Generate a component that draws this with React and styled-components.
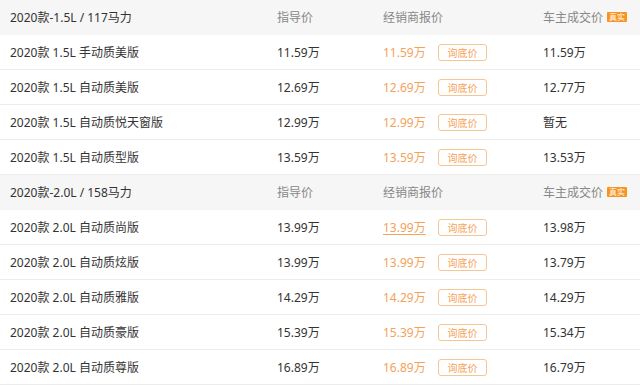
import React from "react";
import styled, { createGlobalStyle } from "styled-components";

const GlobalStyle = createGlobalStyle`
  html, body {
    margin: 0;
    padding: 0;
    background: #fff;
    font-family: "Noto Sans", "Noto Sans CJK SC", sans-serif;
  }
`;

const Table = styled.div`
  width: 640px;
  height: 385px;
  overflow: hidden;
  background: #f6f6f6;
`;

const Row = styled.div`
  display: grid;
  grid-template-columns: 267px 106px 160px 1fr;
  align-items: center;
  padding-left: 10px;
  height: 34px;
  background: ${(p) => (p.$head ? "#f6f6f6" : "#fff")};
  border-bottom: 1px solid ${(p) => (p.$head ? "#f6f6f6" : "#ececec")};
  font-size: 12px;
  color: #333;
`;

const HeadCell = styled.div`
  color: ${(p) => (p.$muted ? "#888" : "#333")};
  display: flex;
  align-items: center;
  gap: 4px;
`;

const Cell = styled.div`
  display: flex;
  align-items: center;
`;

const Dealer = styled.span`
  color: #f4a25a;
  width: 55px;
  text-decoration: ${(p) => (p.$hover ? "underline" : "none")};
  text-underline-offset: 2px;
`;

const AskButton = styled.span`
  box-sizing: border-box;
  width: 49px;
  height: 17px;
  border: 1px solid #f5c795;
  border-radius: 3px;
  color: #f4a25a;
  font-size: 10px;
  display: flex;
  align-items: center;
  justify-content: center;
`;

const Badge = styled.span`
  background: #f7941d;
  color: #fff;
  font-size: 8px;
  line-height: 10px;
  height: 10px;
  padding: 0 2px;
  border-radius: 1px;
`;

const groups = [
  {
    title: "2020款-1.5L / 117马力",
    items: [
      ["2020款 1.5L 手动质美版", "11.59万", "11.59万", "11.59万"],
      ["2020款 1.5L 自动质美版", "12.69万", "12.69万", "12.77万"],
      ["2020款 1.5L 自动质悦天窗版", "12.99万", "12.99万", "暂无"],
      ["2020款 1.5L 自动质型版", "13.59万", "13.59万", "13.53万"],
    ],
  },
  {
    title: "2020款-2.0L / 158马力",
    items: [
      ["2020款 2.0L 自动质尚版", "13.99万", "13.99万", "13.98万", true],
      ["2020款 2.0L 自动质炫版", "13.99万", "13.99万", "13.79万"],
      ["2020款 2.0L 自动质雅版", "14.29万", "14.29万", "14.29万"],
      ["2020款 2.0L 自动质豪版", "15.39万", "15.39万", "15.34万"],
      ["2020款 2.0L 自动质尊版", "16.89万", "16.89万", "16.79万"],
    ],
  },
];

export default function App() {
  return (
    <>
      <GlobalStyle />
      <Table>
        {groups.map((g) => (
          <React.Fragment key={g.title}>
            <Row $head>
              <HeadCell>{g.title}</HeadCell>
              <HeadCell $muted>指导价</HeadCell>
              <HeadCell $muted>经销商报价</HeadCell>
              <HeadCell $muted>
                车主成交价 <Badge>真实</Badge>
              </HeadCell>
            </Row>
            {g.items.map((it) => (
              <Row key={it[0]}>
                <Cell>{it[0]}</Cell>
                <Cell>{it[1]}</Cell>
                <Cell>
                  <Dealer $hover={it[4]}>{it[2]}</Dealer>
                  <AskButton>询底价</AskButton>
                </Cell>
                <Cell>{it[3]}</Cell>
              </Row>
            ))}
          </React.Fragment>
        ))}
      </Table>
    </>
  );
}
